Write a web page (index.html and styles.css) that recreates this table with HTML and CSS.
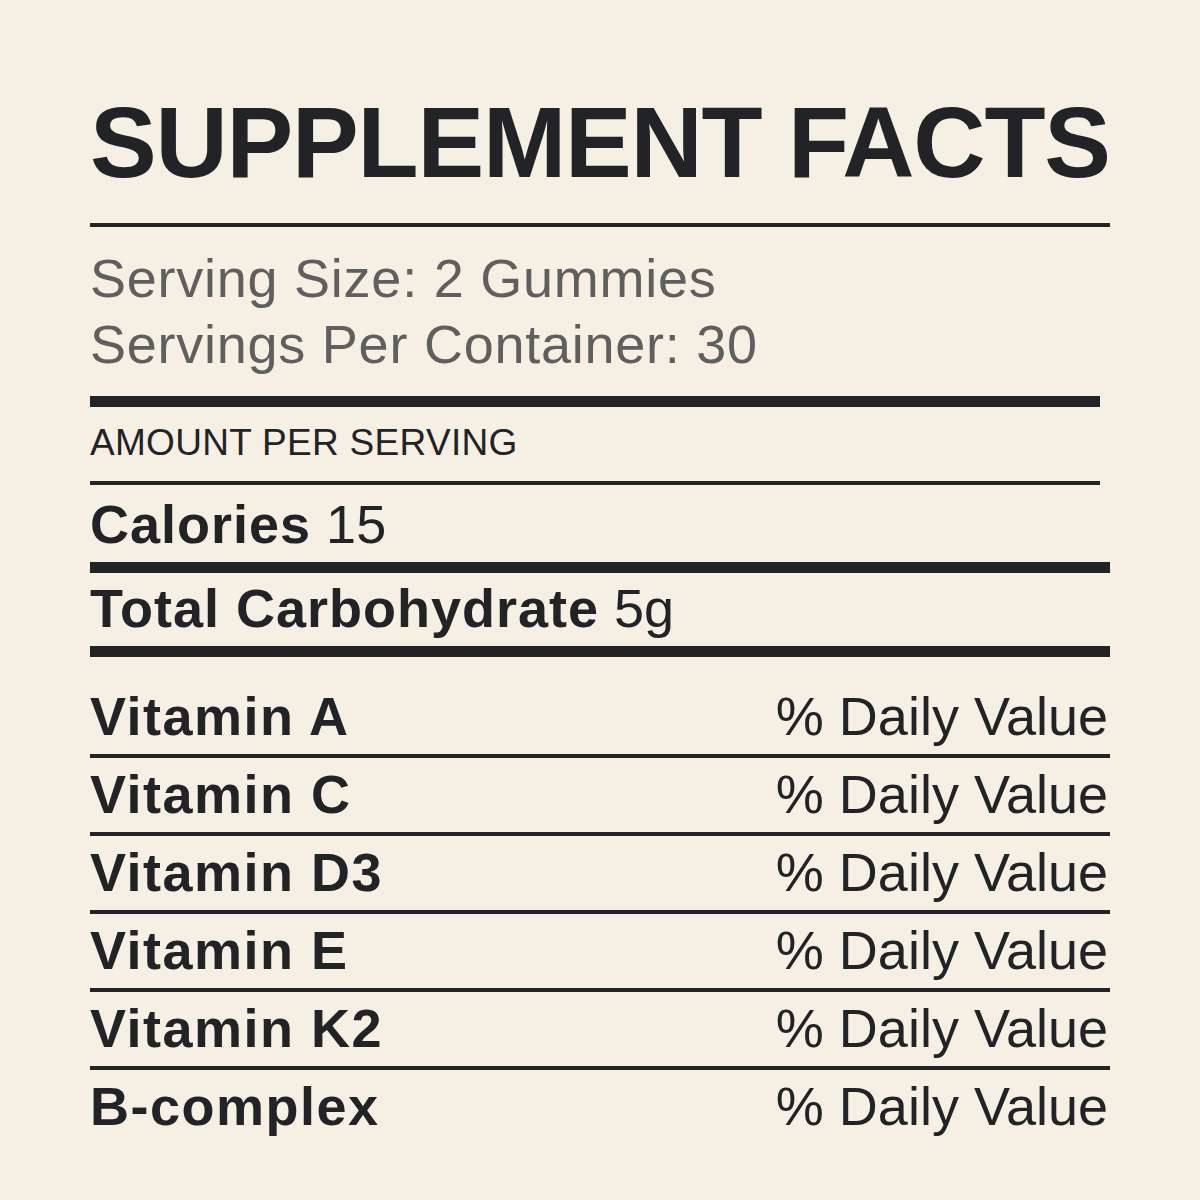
FILE: index.html
```html
<!DOCTYPE html>
<html lang="en">
<head>
<meta charset="utf-8">
<title>Supplement Facts</title>
<link rel="stylesheet" href="styles.css">
</head>
<body>
<main class="label">
  <h1 class="title">SUPPLEMENT FACTS</h1>
  <hr class="rule rule-thin rule-title">
  <div class="serving">
    <p>Serving Size: 2 Gummies</p>
    <p>Servings Per Container: 30</p>
  </div>
  <hr class="rule rule-thick rule-short rule-serving">
  <p class="amount">AMOUNT PER SERVING</p>
  <hr class="rule rule-thin rule-short rule-amount">
  <p class="fact fact-calories"><b>Calories</b> 15</p>
  <hr class="rule rule-thick rule-calories">
  <p class="fact fact-carb"><b>Total Carbohydrate</b> 5g</p>
  <hr class="rule rule-thick rule-carb">
  <ul class="vitamins">
    <li class="vitamin"><span class="name">Vitamin A</span><span class="dv">% Daily Value</span></li>
    <li class="vitamin"><span class="name">Vitamin C</span><span class="dv">% Daily Value</span></li>
    <li class="vitamin"><span class="name">Vitamin D3</span><span class="dv">% Daily Value</span></li>
    <li class="vitamin"><span class="name">Vitamin E</span><span class="dv">% Daily Value</span></li>
    <li class="vitamin"><span class="name">Vitamin K2</span><span class="dv">% Daily Value</span></li>
    <li class="vitamin"><span class="name">B-complex</span><span class="dv">% Daily Value</span></li>
  </ul>
</main>
</body>
</html>
```

FILE: styles.css
```css
html, body {
  margin: 0;
  padding: 0;
  background: #f6f0e4;
}

body {
  font-family: "Liberation Sans", Arial, sans-serif;
  color: #222327;
  width: 1200px;
  height: 1200px;
  overflow: hidden;
}

.label {
  padding: 92px 90px 0 90px;
  width: 1020px;
}

.title {
  margin: 0;
  font-size: 100px;
  line-height: 100px;
  font-weight: 700;
  letter-spacing: -1.2px;
  white-space: nowrap;
}

.rule {
  border: 0;
  margin: 0;
  background: #222327;
  width: 1020px;
}

.rule-thin { height: 4px; }
.rule-thick { height: 11px; }
.rule-short { width: 1010px; }

.rule-title { margin-top: 31px; }

.serving {
  margin-top: 18px;
  color: #5f5f60;
  font-size: 54px;
  line-height: 66px;
  letter-spacing: 0.75px;
}

.serving p { margin: 0; }

.rule-serving { margin-top: 19px; }

.amount {
  margin: 14px 0 0 0;
  font-size: 37px;
  line-height: 44px;
  letter-spacing: 0.3px;
}

.rule-amount { margin-top: 16px; }

.fact {
  margin: 0;
  font-size: 54px;
  line-height: 60px;
}

.fact b {
  font-weight: 700;
  letter-spacing: 1px;
}

.fact-calories { margin-top: 9px; }
.rule-calories { margin-top: 8px; }
.fact-carb { margin-top: 5px; }
.rule-carb { margin-top: 8px; }

.vitamins {
  list-style: none;
  margin: 23px 0 0 0;
  padding: 0;
}

.vitamin {
  display: flex;
  justify-content: space-between;
  align-items: baseline;
  padding: 6px 2px 8px 0;
  border-bottom: 4px solid #222327;
  font-size: 54px;
  line-height: 60px;
}

.vitamin:last-child { border-bottom: 0; }

.name {
  font-weight: 700;
  letter-spacing: 1.5px;
}

.dv { font-weight: 400; }
```
